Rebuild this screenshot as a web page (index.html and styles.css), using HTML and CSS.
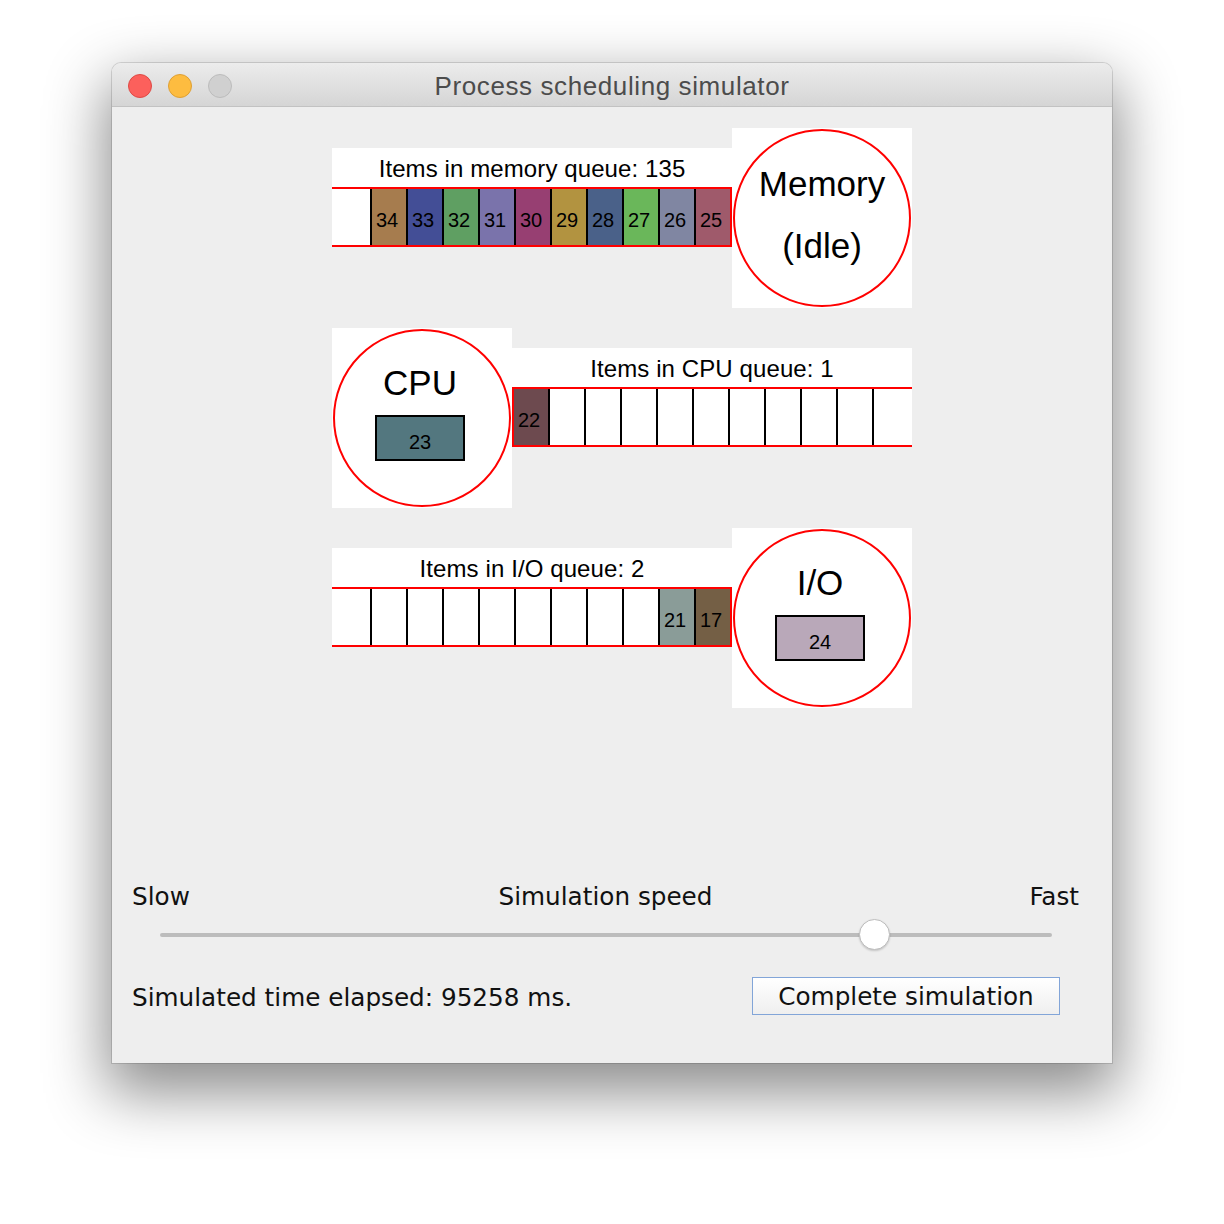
FILE: index.html
```html
<!DOCTYPE html>
<html lang="en">
<head>
<meta charset="utf-8">
<title>Process scheduling simulator</title>
<link rel="stylesheet" href="styles.css">
</head>
<body>
<div class="window">
  <div class="titlebar">
    <div class="lights">
      <span class="light light-red"></span>
      <span class="light light-yellow"></span>
      <span class="light light-grey"></span>
    </div>
    <div class="title">Process scheduling simulator</div>
    <div></div>
  </div>
  <div class="content">
    <div class="stage">
      <div class="row">
        <div class="queue-block">
          <div class="queue-label">Items in memory queue: 135</div>
          <div class="queue queue-end">
            <div class="cell c34">34</div>
            <div class="cell c33">33</div>
            <div class="cell c32">32</div>
            <div class="cell c31">31</div>
            <div class="cell c30">30</div>
            <div class="cell c29">29</div>
            <div class="cell c28">28</div>
            <div class="cell c27">27</div>
            <div class="cell c26">26</div>
            <div class="cell c25">25</div>
          </div>
        </div>
        <div class="station">
          <div class="circle circle-memory">
            <div class="station-name">Memory</div>
            <div class="station-name">(Idle)</div>
          </div>
        </div>
      </div>

      <div class="row">
        <div class="station">
          <div class="circle">
            <div class="station-name shifted">CPU</div>
            <div class="proc p23">23</div>
          </div>
        </div>
        <div class="queue-block">
          <div class="queue-label">Items in CPU queue: 1</div>
          <div class="queue queue-start">
            <div class="cell c22">22</div>
            <div class="cell"></div>
            <div class="cell"></div>
            <div class="cell"></div>
            <div class="cell"></div>
            <div class="cell"></div>
            <div class="cell"></div>
            <div class="cell"></div>
            <div class="cell"></div>
            <div class="cell"></div>
          </div>
        </div>
      </div>

      <div class="row">
        <div class="queue-block">
          <div class="queue-label">Items in I/O queue: 2</div>
          <div class="queue queue-end">
            <div class="cell"></div>
            <div class="cell"></div>
            <div class="cell"></div>
            <div class="cell"></div>
            <div class="cell"></div>
            <div class="cell"></div>
            <div class="cell"></div>
            <div class="cell"></div>
            <div class="cell c21">21</div>
            <div class="cell c17">17</div>
          </div>
        </div>
        <div class="station">
          <div class="circle">
            <div class="station-name shifted">I/O</div>
            <div class="proc p24">24</div>
          </div>
        </div>
      </div>
    </div>

    <div class="controls">
      <div class="speed-row">
        <span class="speed-slow">Slow</span>
        <span class="speed-title">Simulation speed</span>
        <span class="speed-fast">Fast</span>
      </div>
      <div class="slider">
        <div class="track"></div>
        <div class="knob"></div>
      </div>
      <div class="bottom-row">
        <span class="elapsed">Simulated time elapsed: 95258 ms.</span>
        <button class="btn" type="button">Complete simulation</button>
      </div>
    </div>
  </div>
</div>
</body>
</html>
```

FILE: styles.css
```css
html, body {
  margin: 0;
  padding: 0;
  background: #ffffff;
}

body {
  font-family: "Liberation Sans", Arial, sans-serif;
  padding-bottom: 150px;
}

.window {
  margin: 63px 0 0 112px;
  width: 1000px;
  height: 1000px;
  background: #eeeeee;
  border-radius: 9px 9px 0 0;
  box-shadow: 0 0 0 1px rgba(0, 0, 0, 0.13), 0 24px 60px 6px rgba(0, 0, 0, 0.45);
  display: flex;
  flex-direction: column;
}

/* ---------- title bar ---------- */
.titlebar {
  height: 44px;
  box-sizing: border-box;
  border-bottom: 1px solid #c2c2c2;
  border-radius: 9px 9px 0 0;
  background: linear-gradient(#ececec, #d5d5d5);
  display: grid;
  grid-template-columns: 1fr auto 1fr;
  align-items: start;
}

.lights {
  display: flex;
  gap: 16px;
  padding: 11px 0 0 16px;
}

.light {
  width: 24px;
  height: 24px;
  box-sizing: border-box;
  border-radius: 50%;
  border: 1px solid;
}

.light-red { background: #fc605c; border-color: #de4a45; }
.light-yellow { background: #fdbc40; border-color: #dea034; }
.light-grey { background: #d0d0d0; border-color: #bcbcbc; }

.title {
  font-family: "Liberation Sans", Arial, sans-serif;
  font-size: 26px;
  letter-spacing: 0.6px;
  color: #4c4c4c;
  padding-top: 4px;
  line-height: 39px;
  white-space: nowrap;
}

/* ---------- content ---------- */
.content {
  flex: 1;
  display: flex;
  flex-direction: column;
  padding-top: 21px;
}

.stage {
  margin-left: 220px;
  width: 580px;
  display: flex;
  flex-direction: column;
  gap: 20px;
}

.row {
  display: flex;
  height: 180px;
}

.queue-block {
  width: 400px;
  padding-top: 20px;
}

.queue-label {
  height: 39px;
  box-sizing: border-box;
  padding-top: 3px;
  line-height: 36px;
  font-size: 24px;
  letter-spacing: 0.1px;
  text-align: center;
  background: #ffffff;
  color: #000;
  white-space: nowrap;
}

.queue {
  height: 60px;
  box-sizing: border-box;
  background: #ffffff;
  border-top: 2px solid #ff0000;
  border-bottom: 2px solid #ff0000;
  display: flex;
}

.queue-end {
  justify-content: flex-end;
  border-right: 2px solid #ff0000;
}

.queue-start {
  justify-content: flex-start;
  border-left: 2px solid #ff0000;
}

.cell {
  width: 36px;
  height: 56px;
  box-sizing: border-box;
  padding: 21px 4px 0 0;
  line-height: 20px;
  font-size: 20px;
  text-align: center;
  color: #000;
}

.queue-end .cell { border-left: 2px solid #000; }
.queue-start .cell { border-right: 2px solid #000; }

.c34 { background: #a67c4e; }
.c33 { background: #434e96; }
.c32 { background: #5f9f62; }
.c31 { background: #7a73ab; }
.c30 { background: #973f72; }
.c29 { background: #b29340; }
.c28 { background: #4a6189; }
.c27 { background: #6ab75a; }
.c26 { background: #8086a2; }
.c25 { background: #9f5a6b; }
.c22 { background: #6d4a4f; }
.c21 { background: #8a9c98; }
.c17 { background: #745f45; }

.station {
  width: 180px;
  height: 180px;
  background: #ffffff;
  display: flex;
  align-items: center;
  justify-content: center;
}

.circle {
  width: 178px;
  height: 178px;
  box-sizing: border-box;
  border: 2px solid #ff0000;
  border-radius: 50%;
  padding-top: 21px;
}

.circle-memory {
  padding-top: 22px;
}

.station-name {
  font-size: 35px;
  line-height: 62px;
  text-align: center;
  color: #000;
  white-space: nowrap;
}

.station-name.shifted {
  padding-right: 4px;
}

.proc {
  width: 90px;
  height: 46px;
  box-sizing: border-box;
  margin: 1px 0 0 40px;
  border: 2px solid #000;
  padding-top: 15px;
  font-size: 20px;
  line-height: 20px;
  text-align: center;
  color: #000;
}

.p23 { background: #53777f; }
.p24 { background: #b9a8b9; }

/* ---------- controls ---------- */
.controls {
  margin-top: 174px;
  padding: 0 33px 0 20px;
  font-family: "DejaVu Sans", Verdana, sans-serif;
  font-size: 24.7px;
  color: #111;
}

.speed-row {
  display: grid;
  grid-template-columns: 1fr auto 1fr;
  height: 30px;
  line-height: 30px;
  white-space: nowrap;
}

.speed-fast {
  justify-self: end;
}

.slider {
  position: relative;
  height: 32px;
  box-sizing: border-box;
  padding-top: 14px;
  margin: 7px 27px 0 28px;
}

.track {
  height: 4px;
  border-radius: 2px;
  background: #bcbcbc;
}

.knob {
  position: absolute;
  top: 0;
  left: calc(80% - 15px);
  width: 31px;
  height: 31px;
  box-sizing: border-box;
  border-radius: 50%;
  background: #ffffff;
  border: 1px solid #bdbdbd;
  box-shadow: 0 1px 2px rgba(0, 0, 0, 0.18);
}

.bottom-row {
  margin-top: 26px;
  display: flex;
  justify-content: space-between;
  align-items: flex-start;
}

.elapsed {
  padding-top: 2px;
  line-height: 38px;
  white-space: nowrap;
}

.btn {
  width: 308px;
  height: 38px;
  margin: 0 19px 0 0;
  padding: 2px 0 0 0;
  box-sizing: border-box;
  border: 1px solid #82a5d8;
  border-radius: 0;
  background: linear-gradient(#ffffff, #efefef);
  font-family: "DejaVu Sans", Verdana, sans-serif;
  font-size: 24.7px;
  line-height: 34px;
  color: #111;
  white-space: nowrap;
}
```
